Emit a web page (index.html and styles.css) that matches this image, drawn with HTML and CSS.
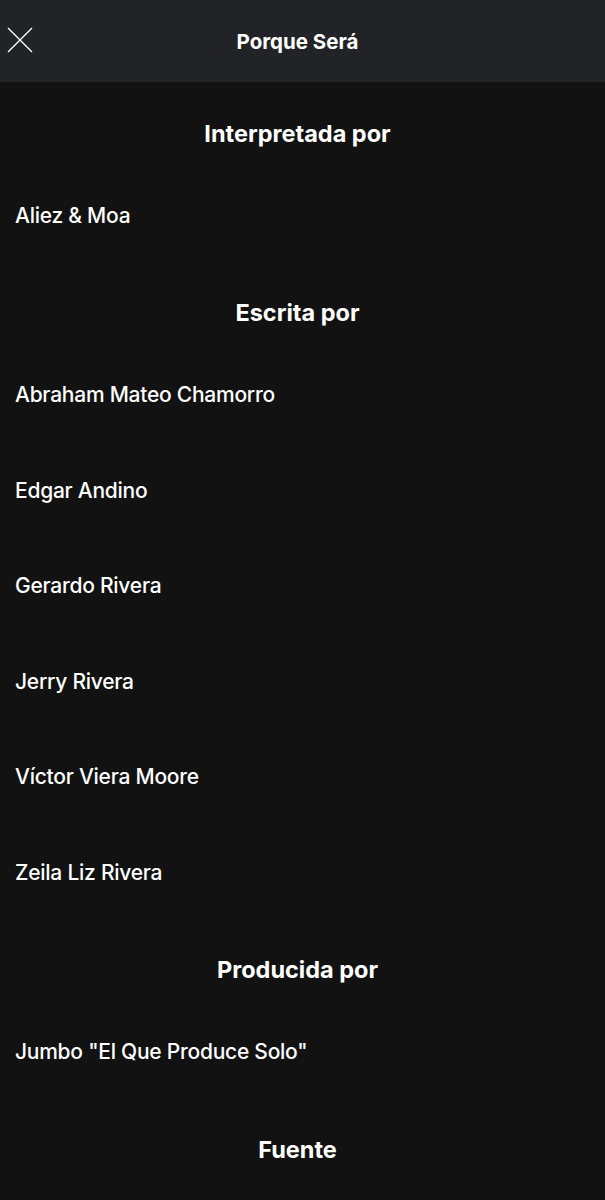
FILE: index.html
```html
<!DOCTYPE html>
<html lang="es">
<head>
<meta charset="utf-8">
<title>Porque Será</title>
<link rel="stylesheet" href="styles.css">
</head>
<body>
<header class="topbar">
  <button class="close" aria-label="Cerrar">
    <svg width="26" height="26" viewBox="0 0 26 26"><path d="M1 1 L25 25 M25 1 L1 25" stroke="#fff" stroke-width="1.4" fill="none"/></svg>
  </button>
  <h1 class="title">Porque Será</h1>
</header>
<main class="credits">
  <section class="group">
    <h2 class="group-title">Interpretada por</h2>
    <div class="row">Aliez &amp; Moa</div>
  </section>
  <section class="group">
    <h2 class="group-title">Escrita por</h2>
    <div class="row">Abraham Mateo Chamorro</div>
    <div class="row">Edgar Andino</div>
    <div class="row">Gerardo Rivera</div>
    <div class="row">Jerry Rivera</div>
    <div class="row">Víctor Viera Moore</div>
    <div class="row">Zeila Liz Rivera</div>
  </section>
  <section class="group">
    <h2 class="group-title">Producida por</h2>
    <div class="row">Jumbo "El Que Produce Solo"</div>
  </section>
  <section class="group">
    <h2 class="group-title">Fuente</h2>
  </section>
</main>
</body>
</html>
```
FILE: styles.css
```css
html, body {
  margin: 0;
  padding: 0;
  background: #121212;
  color: #fff;
  font-family: "Inter", "Liberation Sans", sans-serif;
}

.topbar {
  height: 82px;
  background: #222326;
  display: flex;
  align-items: center;
  justify-content: center;
  padding-right: 10px;
  position: relative;
}

.close {
  position: absolute;
  left: 7px;
  top: 27px;
  width: 26px;
  height: 26px;
  padding: 0;
  border: 0;
  background: none;
  display: flex;
}

.title {
  margin: 0;
  font-size: 20.5px;
  font-weight: 700;
}

.credits {
  display: flex;
  flex-direction: column;
}

.group {
  padding-top: 18px;
}

.group-title {
  margin: 0;
  height: 66px;
  display: flex;
  align-items: center;
  justify-content: center;
  padding-right: 10px;
  font-size: 23.5px;
  font-weight: 700;
}

.row {
  box-sizing: border-box;
  height: 95.5px;
  display: flex;
  align-items: center;
  padding: 3px 0 0 15px;
  font-size: 21px;
  font-weight: 500;
  letter-spacing: -0.25px;
}
```
